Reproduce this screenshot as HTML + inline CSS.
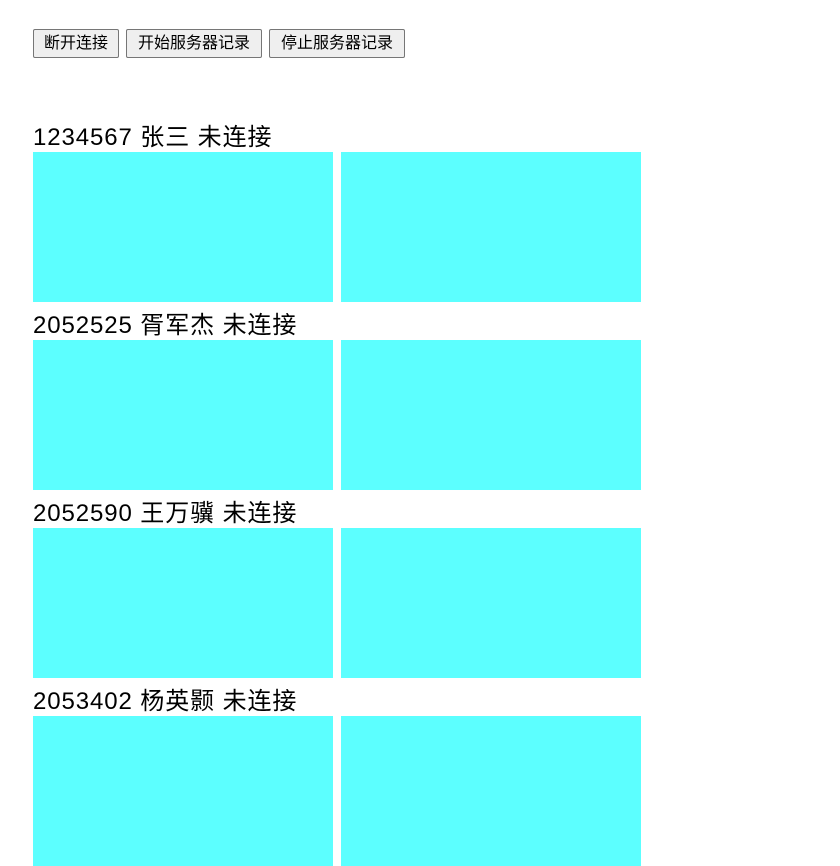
<!DOCTYPE html>
<html><head><meta charset="utf-8"><style>
html,body{margin:0;background:#fff;font-family:"Liberation Sans","Noto Sans CJK SC",sans-serif;height:814px;overflow:hidden;}
.btn{position:absolute;top:29px;height:29px;box-sizing:border-box;border:1px solid #767676;border-radius:2px;background:#efefef;font-size:16px;line-height:27px;text-align:center;color:#000;}
.lbl{position:absolute;left:33px;font-size:24px;line-height:28px;color:#000;white-space:nowrap;letter-spacing:0.9px;}
.box{position:absolute;width:300px;height:150px;background:#5cffff;}
</style></head><body>
<div class="btn" style="left:33px;width:86px">断开连接</div>
<div class="btn" style="left:126px;width:136px">开始服务器记录</div>
<div class="btn" style="left:269px;width:136px">停止服务器记录</div>

<div class="lbl" style="top:124px">1234567 张三 未连接</div>
<div class="box" style="left:33px;top:152px"></div><div class="box" style="left:341px;top:152px"></div>
<div class="lbl" style="top:312px">2052525 胥军杰 未连接</div>
<div class="box" style="left:33px;top:340px"></div><div class="box" style="left:341px;top:340px"></div>
<div class="lbl" style="top:500px">2052590 王万骥 未连接</div>
<div class="box" style="left:33px;top:528px"></div><div class="box" style="left:341px;top:528px"></div>
<div class="lbl" style="top:688px">2053402 杨英颢 未连接</div>
<div class="box" style="left:33px;top:716px"></div><div class="box" style="left:341px;top:716px"></div>
</body></html>
